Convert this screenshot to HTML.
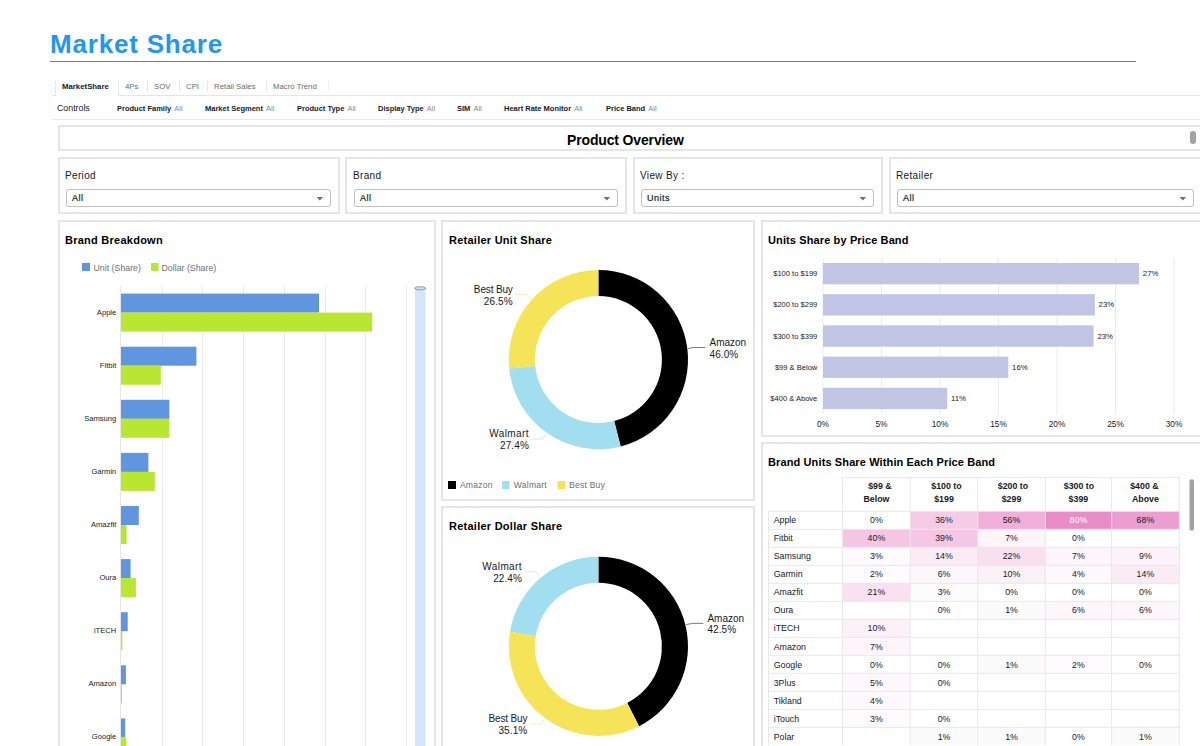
<!DOCTYPE html>
<html><head><meta charset="utf-8">
<style>
*{margin:0;padding:0;box-sizing:border-box}
html,body{width:1200px;height:746px;overflow:hidden;background:#fff}
body{position:relative;font-family:"Liberation Sans",sans-serif;color:#16191f}
.a{position:absolute;white-space:nowrap}
.box{position:absolute;border:2px solid #e6e6e6;background:#fff}
.t{position:absolute;white-space:nowrap;font-weight:bold;font-size:11px;color:#000;letter-spacing:0.25px}
.dd{position:absolute;height:18px;border:1px solid #bdbfc1;border-radius:3px;background:#fff}
.dd span{position:absolute;left:5px;top:3px;font-size:9px;letter-spacing:0.5px;color:#16191f;-webkit-text-stroke:0.2px #16191f}
.dd i{position:absolute;right:6.5px;top:6.5px;width:7.5px;height:4px;background:#707070;clip-path:polygon(0 0,100% 0,50% 100%)}
.tg{top:82px;font-size:7.8px;color:#686c70}
.sep{top:81px;width:1px;height:10px;background:#e3e6e6}
.ctl{top:104px;font-size:7.5px;font-weight:bold;color:#16191f}
.ctl span{font-weight:normal;color:#878c91;margin-left:1px}
.flt{top:170px;font-size:10px;letter-spacing:0.35px;color:#16191f}
.lbl{position:absolute;font-size:9px;color:#16191f}
</style></head><body>

<!-- Title -->
<div class="a" id="title" style="left:50px;top:29px;font-size:26px;letter-spacing:0.8px;font-weight:bold;color:#2196f3;">Market Share</div>
<div class="a" style="left:50px;top:61px;width:1086px;height:1px;background:#2196f3"></div>

<!-- Tabs -->
<div class="a" style="left:50px;top:81px;width:1px;height:665px;background:#fafafa"></div>
<div class="a" style="left:52px;top:95px;width:3px;height:1px;background:#e3e6e6"></div>
<div class="a" style="left:55px;top:81px;width:1px;height:15px;background:#e3e6e6"></div>
<div class="a" style="left:118px;top:81px;width:1px;height:15px;background:#e3e6e6"></div>
<div class="a" style="left:118px;top:95px;width:1082px;height:1px;background:#e3e6e6"></div>
<div class="a tab" style="left:62px;top:82px;font-size:7.8px;font-weight:bold;color:#16191f">MarketShare</div>
<div class="a tg" style="left:125px">4Ps</div>
<div class="a sep" style="left:147px"></div>
<div class="a tg" style="left:154px">SOV</div>
<div class="a sep" style="left:179px"></div>
<div class="a tg" style="left:186px">CPI</div>
<div class="a sep" style="left:207px"></div>
<div class="a tg" style="left:214px">Retail Sales</div>
<div class="a sep" style="left:266px"></div>
<div class="a tg" style="left:273px">Macro Trend</div>
<div class="a sep" style="left:328px;background:#eef0f0"></div>

<!-- Controls -->
<div class="a" style="left:57px;top:103px;font-size:8.8px;color:#16191f">Controls</div>
<div class="a ctl" style="left:117px">Product Family <span>All</span></div>
<div class="a ctl" style="left:205px">Market Segment <span>All</span></div>
<div class="a ctl" style="left:297px">Product Type <span>All</span></div>
<div class="a ctl" style="left:378px">Display Type <span>All</span></div>
<div class="a ctl" style="left:457px">SIM <span>All</span></div>
<div class="a ctl" style="left:504px">Heart Rate Monitor <span>All</span></div>
<div class="a ctl" style="left:606px">Price Band <span>All</span></div>
<div class="a" style="left:52px;top:119px;width:1148px;height:1px;background:#e9ebeb"></div>

<!-- Product overview -->
<div class="box" style="left:58px;top:125px;width:1150px;height:26px"></div>
<div class="t" style="left:567px;top:132px;font-size:14px;letter-spacing:-0.15px">Product Overview</div>
<div class="a" style="left:1190px;top:131px;width:6px;height:13px;border-radius:3px;background:#a2a2a2"></div>

<!-- Filters -->
<div class="box" style="left:58px;top:157px;width:282px;height:57px"></div>
<div class="box" style="left:345px;top:157px;width:282px;height:57px"></div>
<div class="box" style="left:633px;top:157px;width:250px;height:57px"></div>
<div class="box" style="left:889px;top:157px;width:320px;height:57px"></div>
<div class="a flt" style="left:65px">Period</div>
<div class="a flt" style="left:353px">Brand</div>
<div class="a flt" style="left:640px">View By :</div>
<div class="a flt" style="left:896px">Retailer</div>
<div class="dd" style="left:66px;width:265px;top:189px"><span>All</span><i></i></div>
<div class="dd" style="left:354px;width:264px;top:189px"><span>All</span><i></i></div>
<div class="dd" style="left:641px;width:233px;top:189px"><span>Units</span><i></i></div>
<div class="dd" style="left:897px;width:297px;top:189px"><span>All</span><i></i></div>

<!-- Panels -->
<div class="box" style="left:58px;top:220px;width:378px;height:540px"></div>
<div class="box" style="left:441px;top:220px;width:314px;height:281px"></div>
<div class="box" style="left:441px;top:506px;width:314px;height:260px"></div>
<div class="box" style="left:761px;top:220px;width:460px;height:217px"></div>
<div class="box" style="left:761px;top:442px;width:460px;height:320px"></div>

<div class="t" style="left:65px;top:234px">Brand Breakdown</div>
<div class="t" style="left:449px;top:234px">Retailer Unit Share</div>
<div class="t" style="left:449px;top:520px">Retailer Dollar Share</div>
<div class="t" style="left:768px;top:234px;letter-spacing:0.12px">Units Share by Price Band</div>
<div class="t" style="left:768px;top:456px;letter-spacing:0.12px">Brand Units Share Within Each Price Band</div>

<!-- BB -->
<svg class="a" style="left:0;top:0" width="1200" height="746" font-family="Liberation Sans, sans-serif">
<rect x="82" y="263" width="8" height="8" fill="#6096e0"/>
<text x="93.5" y="270.5" font-size="8.8" fill="#6b6f73">Unit (Share)</text>
<rect x="151" y="263" width="7.5" height="8" fill="#b9e630"/>
<text x="161.5" y="270.5" font-size="8.8" fill="#6b6f73">Dollar (Share)</text>
<rect x="162" y="286" width="1" height="460" fill="#ebebeb"/>
<rect x="202" y="286" width="1" height="460" fill="#ebebeb"/>
<rect x="243" y="286" width="1" height="460" fill="#ebebeb"/>
<rect x="284" y="286" width="1" height="460" fill="#ebebeb"/>
<rect x="325" y="286" width="1" height="460" fill="#ebebeb"/>
<rect x="365" y="286" width="1" height="460" fill="#ebebeb"/>
<rect x="406" y="286" width="1" height="460" fill="#ebebeb"/>
<rect x="120" y="286" width="1" height="460" fill="#e6e6e6"/>
<rect x="121" y="293.6" width="198.0" height="19" fill="#6096e0"/>
<rect x="121" y="312.6" width="251.2" height="19" fill="#b9e630"/>
<text x="116.3" y="314.6" font-size="7.6" fill="#16191f" text-anchor="end">Apple</text>
<rect x="121" y="346.7" width="75.4" height="19" fill="#6096e0"/>
<rect x="121" y="365.7" width="39.8" height="19" fill="#b9e630"/>
<text x="116.3" y="367.7" font-size="7.6" fill="#16191f" text-anchor="end">Fitbit</text>
<rect x="121" y="399.8" width="48.4" height="19" fill="#6096e0"/>
<rect x="121" y="418.8" width="48.4" height="19" fill="#b9e630"/>
<text x="116.3" y="420.8" font-size="7.6" fill="#16191f" text-anchor="end">Samsung</text>
<rect x="121" y="452.9" width="27.4" height="19" fill="#6096e0"/>
<rect x="121" y="471.9" width="33.8" height="19" fill="#b9e630"/>
<text x="116.3" y="473.9" font-size="7.6" fill="#16191f" text-anchor="end">Garmin</text>
<rect x="121" y="506.0" width="17.8" height="19" fill="#6096e0"/>
<rect x="121" y="525.0" width="5.6" height="19" fill="#b9e630"/>
<text x="116.3" y="527.0" font-size="7.6" fill="#16191f" text-anchor="end">Amazfit</text>
<rect x="121" y="559.1" width="9.6" height="19" fill="#6096e0"/>
<rect x="121" y="578.1" width="14.9" height="19" fill="#b9e630"/>
<text x="116.3" y="580.1" font-size="7.6" fill="#16191f" text-anchor="end">Oura</text>
<rect x="121" y="612.2" width="6.7" height="19" fill="#6096e0"/>
<rect x="121" y="631.2" width="1.4" height="19" fill="#b9e630"/>
<text x="116.3" y="633.2" font-size="7.6" fill="#16191f" text-anchor="end">iTECH</text>
<rect x="121" y="665.3" width="4.9" height="19" fill="#6096e0"/>
<rect x="121" y="684.3" width="1.0" height="19" fill="#b9e630"/>
<text x="116.3" y="686.3" font-size="7.6" fill="#16191f" text-anchor="end">Amazon</text>
<rect x="121" y="718.4" width="4.2" height="19" fill="#6096e0"/>
<rect x="121" y="737.4" width="5.3" height="19" fill="#b9e630"/>
<text x="116.3" y="739.4" font-size="7.6" fill="#16191f" text-anchor="end">Google</text>
<rect x="415" y="288.5" width="10.5" height="470" fill="#d4e6f8"/>
<path d="M414.5,288.3 L417,286.8 L423.5,286.8 L426,288.3 L423.5,289.8 L417,289.8 Z" fill="#c9def0" stroke="#7d8a95" stroke-width="0.8"/>
</svg>
<!-- /BB -->
<!-- DONUT -->
<svg class="a" style="left:0;top:0" width="1200" height="746" font-family="Liberation Sans, sans-serif">
<path d="M598.40,270.00 A89.6,89.6 0 0 1 620.68,446.39 L614.19,421.11 A63.5,63.5 0 0 0 598.40,296.10 Z" fill="#000000"/>
<path d="M620.68,446.39 A89.6,89.6 0 0 1 509.25,368.59 L535.22,365.97 A63.5,63.5 0 0 0 614.19,421.11 Z" fill="#a0def0"/>
<path d="M509.25,368.59 A89.6,89.6 0 0 1 598.40,270.00 L598.40,296.10 A63.5,63.5 0 0 0 535.22,365.97 Z" fill="#f6e458"/>
<polyline points="687.9,348.6 693,347.5 705.4,347.5" fill="none" stroke="#6b6b6b" stroke-width="0.9"/>
<polyline points="516,294.3 526.3,294.3 531.7,299.3" fill="none" stroke="#f7ec9e" stroke-width="0.9"/>
<polyline points="532,439 542.3,439 546.3,433.7" fill="none" stroke="#c5ebf7" stroke-width="0.9"/>
<text x="709.5" y="345.7" font-size="10" fill="#16191f" letter-spacing="0">Amazon</text>
<text x="709.5" y="357.6" font-size="10" fill="#16191f" letter-spacing="0.1">46.0%</text>
<text x="512.7" y="292.8" font-size="10" fill="#16191f" text-anchor="end" letter-spacing="-0.15">Best Buy</text>
<text x="512.7" y="304.5" font-size="10" fill="#16191f" text-anchor="end" letter-spacing="0.1">26.5%</text>
<text x="528.9" y="437.1" font-size="10" fill="#16191f" text-anchor="end" letter-spacing="0.4">Walmart</text>
<text x="528.9" y="449.1" font-size="10" fill="#16191f" text-anchor="end" letter-spacing="0.1">27.4%</text>
<rect x="448" y="481" width="8" height="8" fill="#000000"/><text x="459.9" y="487.8" font-size="8.6" fill="#6b6f73" letter-spacing="0.2">Amazon</text>
<rect x="502" y="481" width="7.5" height="8" fill="#a0def0"/><text x="513.8" y="487.8" font-size="8.6" fill="#6b6f73" letter-spacing="0.2">Walmart</text>
<rect x="557.5" y="481" width="8" height="8" fill="#f6e458"/><text x="569.1" y="487.8" font-size="8.6" fill="#6b6f73" letter-spacing="0.2">Best Buy</text>
<path d="M598.40,556.70 A89.6,89.6 0 0 1 639.08,726.13 L627.23,702.88 A63.5,63.5 0 0 0 598.40,582.80 Z" fill="#000000"/>
<path d="M639.08,726.13 A89.6,89.6 0 0 1 509.99,631.73 L535.75,635.97 A63.5,63.5 0 0 0 627.23,702.88 Z" fill="#f6e458"/>
<path d="M509.99,631.73 A89.6,89.6 0 0 1 598.40,556.70 L598.40,582.80 A63.5,63.5 0 0 0 535.75,635.97 Z" fill="#a0def0"/>
<polyline points="686.1,624.5 692.8,623.4 703.3,623.4" fill="none" stroke="#6b6b6b" stroke-width="0.9"/>
<polyline points="525,571.7 535.7,571.7 539.7,576.7" fill="none" stroke="#c5ebf7" stroke-width="0.9"/>
<polyline points="530.3,724 541,724 544.7,718.7" fill="none" stroke="#f7ec9e" stroke-width="0.9"/>
<text x="707.4" y="621.6" font-size="10" fill="#16191f" letter-spacing="0">Amazon</text>
<text x="707.4" y="633.2" font-size="10" fill="#16191f" letter-spacing="0.1">42.5%</text>
<text x="522.0" y="569.5" font-size="10" fill="#16191f" text-anchor="end" letter-spacing="0.4">Walmart</text>
<text x="522.0" y="581.5" font-size="10" fill="#16191f" text-anchor="end" letter-spacing="0.1">22.4%</text>
<text x="527.3" y="722.1" font-size="10" fill="#16191f" text-anchor="end" letter-spacing="-0.15">Best Buy</text>
<text x="527.3" y="733.8" font-size="10" fill="#16191f" text-anchor="end" letter-spacing="0.1">35.1%</text>
</svg>
<!-- /DONUT -->
<!-- USPB -->
<svg class="a" style="left:0;top:0" width="1200" height="746" font-family="Liberation Sans, sans-serif">
<rect x="822.5" y="258" width="1" height="156" fill="#ebebeb"/>
<text x="823.0" y="427" font-size="8.3" fill="#16191f" text-anchor="middle">0%</text>
<rect x="881.0" y="258" width="1" height="156" fill="#ebebeb"/>
<text x="881.5" y="427" font-size="8.3" fill="#16191f" text-anchor="middle">5%</text>
<rect x="939.5" y="258" width="1" height="156" fill="#ebebeb"/>
<text x="940.0" y="427" font-size="8.3" fill="#16191f" text-anchor="middle">10%</text>
<rect x="998.0" y="258" width="1" height="156" fill="#ebebeb"/>
<text x="998.5" y="427" font-size="8.3" fill="#16191f" text-anchor="middle">15%</text>
<rect x="1056.5" y="258" width="1" height="156" fill="#ebebeb"/>
<text x="1057.0" y="427" font-size="8.3" fill="#16191f" text-anchor="middle">20%</text>
<rect x="1115.0" y="258" width="1" height="156" fill="#ebebeb"/>
<text x="1115.5" y="427" font-size="8.3" fill="#16191f" text-anchor="middle">25%</text>
<rect x="1173.5" y="258" width="1" height="156" fill="#ebebeb"/>
<text x="1174.0" y="427" font-size="8.3" fill="#16191f" text-anchor="middle">30%</text>
<rect x="823" y="263.0" width="316.0" height="21.3" fill="#c1c4e4"/>
<text x="817.3" y="276.2" font-size="7.55" fill="#16191f" text-anchor="end">$100 to $199</text>
<text x="1142.8" y="276.2" font-size="7.8" fill="#16191f">27%</text>
<rect x="823" y="294.2" width="271.8" height="21.3" fill="#c1c4e4"/>
<text x="817.3" y="307.4" font-size="7.55" fill="#16191f" text-anchor="end">$200 to $299</text>
<text x="1098.6" y="307.4" font-size="7.8" fill="#16191f">23%</text>
<rect x="823" y="325.4" width="270.6" height="21.3" fill="#c1c4e4"/>
<text x="817.3" y="338.6" font-size="7.55" fill="#16191f" text-anchor="end">$300 to $399</text>
<text x="1097.4" y="338.6" font-size="7.8" fill="#16191f">23%</text>
<rect x="823" y="356.6" width="185.3" height="21.3" fill="#c1c4e4"/>
<text x="817.3" y="369.8" font-size="7.55" fill="#16191f" text-anchor="end">$99 &amp; Below</text>
<text x="1012.1" y="369.8" font-size="7.8" fill="#16191f">16%</text>
<rect x="823" y="387.8" width="124.2" height="21.3" fill="#c1c4e4"/>
<text x="817.3" y="401.0" font-size="7.55" fill="#16191f" text-anchor="end">$400 &amp; Above</text>
<text x="951.0" y="401.0" font-size="7.8" fill="#16191f">11%</text>
</svg>
<!-- /USPB -->
<!-- TBL -->
<svg class="a" style="left:0;top:0" width="1200" height="746" font-family="Liberation Sans, sans-serif">
<rect x="910.2" y="511.3" width="67.5" height="18.0" fill="#f6cbe6"/>
<rect x="977.7" y="511.3" width="67.6" height="18.0" fill="#f0aed8"/>
<rect x="1045.3" y="511.3" width="66.3" height="18.0" fill="#ea8cc8"/>
<rect x="1111.6" y="511.3" width="67.7" height="18.0" fill="#ed9dd0"/>
<rect x="842.5" y="529.3" width="67.7" height="18.0" fill="#f4c6e4"/>
<rect x="910.2" y="529.3" width="67.5" height="18.0" fill="#f5c7e4"/>
<rect x="977.7" y="529.3" width="67.6" height="18.0" fill="#fdf5fa"/>
<rect x="842.5" y="547.3" width="67.7" height="18.0" fill="#fefbfd"/>
<rect x="910.2" y="547.3" width="67.5" height="18.0" fill="#fbebf5"/>
<rect x="977.7" y="547.3" width="67.6" height="18.0" fill="#f9dff0"/>
<rect x="1045.3" y="547.3" width="66.3" height="18.0" fill="#fdf5fa"/>
<rect x="1111.6" y="547.3" width="67.7" height="18.0" fill="#fdf2f9"/>
<rect x="842.5" y="565.3" width="67.7" height="18.0" fill="#fefcfe"/>
<rect x="910.2" y="565.3" width="67.5" height="18.0" fill="#fdf6fb"/>
<rect x="977.7" y="565.3" width="67.6" height="18.0" fill="#fcf1f8"/>
<rect x="1045.3" y="565.3" width="66.3" height="18.0" fill="#fef9fc"/>
<rect x="1111.6" y="565.3" width="67.7" height="18.0" fill="#fbebf5"/>
<rect x="842.5" y="583.3" width="67.7" height="18.0" fill="#f9e1f1"/>
<rect x="910.2" y="583.3" width="67.5" height="18.0" fill="#fefbfd"/>
<rect x="977.7" y="601.3" width="67.6" height="18.0" fill="#fbfbfb"/>
<rect x="1045.3" y="601.3" width="66.3" height="18.0" fill="#fdf6fb"/>
<rect x="1111.6" y="601.3" width="67.7" height="18.0" fill="#fdf6fb"/>
<rect x="842.5" y="619.3" width="67.7" height="18.0" fill="#fcf1f8"/>
<rect x="842.5" y="637.3" width="67.7" height="18.0" fill="#fdf5fa"/>
<rect x="977.7" y="655.3" width="67.6" height="18.0" fill="#fbfbfb"/>
<rect x="1045.3" y="655.3" width="66.3" height="18.0" fill="#fefcfe"/>
<rect x="842.5" y="673.3" width="67.7" height="18.0" fill="#fef8fc"/>
<rect x="842.5" y="691.3" width="67.7" height="18.0" fill="#fef9fc"/>
<rect x="842.5" y="709.3" width="67.7" height="18.0" fill="#fefbfd"/>
<rect x="910.2" y="727.3" width="67.5" height="18.0" fill="#fbfbfb"/>
<rect x="977.7" y="727.3" width="67.6" height="18.0" fill="#fbfbfb"/>
<rect x="1111.6" y="727.3" width="67.7" height="18.0" fill="#fbfbfb"/>
<rect x="842.0" y="477.1" width="337.8" height="1" fill="#e8e8e8"/>
<rect x="768.0" y="510.8" width="411.8" height="1" fill="#e8e8e8"/>
<rect x="768.0" y="528.8" width="411.8" height="1" fill="#e8e8e8"/>
<rect x="768.0" y="546.8" width="411.8" height="1" fill="#e8e8e8"/>
<rect x="768.0" y="564.8" width="411.8" height="1" fill="#e8e8e8"/>
<rect x="768.0" y="582.8" width="411.8" height="1" fill="#e8e8e8"/>
<rect x="768.0" y="600.8" width="411.8" height="1" fill="#e8e8e8"/>
<rect x="768.0" y="618.8" width="411.8" height="1" fill="#e8e8e8"/>
<rect x="768.0" y="636.8" width="411.8" height="1" fill="#e8e8e8"/>
<rect x="768.0" y="654.8" width="411.8" height="1" fill="#e8e8e8"/>
<rect x="768.0" y="672.8" width="411.8" height="1" fill="#e8e8e8"/>
<rect x="768.0" y="690.8" width="411.8" height="1" fill="#e8e8e8"/>
<rect x="768.0" y="708.8" width="411.8" height="1" fill="#e8e8e8"/>
<rect x="768.0" y="726.8" width="411.8" height="1" fill="#e8e8e8"/>

<rect x="768.0" y="511.3" width="1" height="234.0" fill="#e8e8e8"/>
<rect x="842.0" y="477.6" width="1" height="267.7" fill="#e8e8e8"/>
<rect x="909.7" y="477.6" width="1" height="267.7" fill="#e8e8e8"/>
<rect x="977.2" y="477.6" width="1" height="267.7" fill="#e8e8e8"/>
<rect x="1044.8" y="477.6" width="1" height="267.7" fill="#e8e8e8"/>
<rect x="1111.1" y="477.6" width="1" height="267.7" fill="#e8e8e8"/>
<rect x="1178.8" y="477.6" width="1" height="267.7" fill="#e8e8e8"/>
<text x="879.9" y="489.3" font-size="8.8" font-weight="bold" fill="#16191f" text-anchor="middle">$99 &amp;</text>
<text x="876.4" y="502" font-size="8.8" font-weight="bold" fill="#16191f" text-anchor="middle">Below</text>
<text x="946.5" y="489.3" font-size="8.8" font-weight="bold" fill="#16191f" text-anchor="middle">$100 to</text>
<text x="944.0" y="502" font-size="8.8" font-weight="bold" fill="#16191f" text-anchor="middle">$199</text>
<text x="1013.0" y="489.3" font-size="8.8" font-weight="bold" fill="#16191f" text-anchor="middle">$200 to</text>
<text x="1011.5" y="502" font-size="8.8" font-weight="bold" fill="#16191f" text-anchor="middle">$299</text>
<text x="1078.9" y="489.3" font-size="8.8" font-weight="bold" fill="#16191f" text-anchor="middle">$300 to</text>
<text x="1078.4" y="502" font-size="8.8" font-weight="bold" fill="#16191f" text-anchor="middle">$399</text>
<text x="1144.4" y="489.3" font-size="8.8" font-weight="bold" fill="#16191f" text-anchor="middle">$400 &amp;</text>
<text x="1145.4" y="502" font-size="8.8" font-weight="bold" fill="#16191f" text-anchor="middle">Above</text>
<text x="773.7" y="523.1" font-size="8.8" fill="#16191f">Apple</text>
<text x="876.4" y="523.1" font-size="8.8" fill="#16191f" text-anchor="middle">0%</text>
<text x="944.0" y="523.1" font-size="8.8" fill="#16191f" text-anchor="middle">36%</text>
<text x="1011.5" y="523.1" font-size="8.8" fill="#16191f" text-anchor="middle">56%</text>
<text x="1078.4" y="523.1" font-size="8.8" fill="#ffffff" text-anchor="middle">80%</text>
<text x="1145.4" y="523.1" font-size="8.8" fill="#16191f" text-anchor="middle">68%</text>
<text x="773.7" y="541.1" font-size="8.8" fill="#16191f">Fitbit</text>
<text x="876.4" y="541.1" font-size="8.8" fill="#16191f" text-anchor="middle">40%</text>
<text x="944.0" y="541.1" font-size="8.8" fill="#16191f" text-anchor="middle">39%</text>
<text x="1011.5" y="541.1" font-size="8.8" fill="#16191f" text-anchor="middle">7%</text>
<text x="1078.4" y="541.1" font-size="8.8" fill="#16191f" text-anchor="middle">0%</text>
<text x="773.7" y="559.2" font-size="8.8" fill="#16191f">Samsung</text>
<text x="876.4" y="559.2" font-size="8.8" fill="#16191f" text-anchor="middle">3%</text>
<text x="944.0" y="559.2" font-size="8.8" fill="#16191f" text-anchor="middle">14%</text>
<text x="1011.5" y="559.2" font-size="8.8" fill="#16191f" text-anchor="middle">22%</text>
<text x="1078.4" y="559.2" font-size="8.8" fill="#16191f" text-anchor="middle">7%</text>
<text x="1145.4" y="559.2" font-size="8.8" fill="#16191f" text-anchor="middle">9%</text>
<text x="773.7" y="577.2" font-size="8.8" fill="#16191f">Garmin</text>
<text x="876.4" y="577.2" font-size="8.8" fill="#16191f" text-anchor="middle">2%</text>
<text x="944.0" y="577.2" font-size="8.8" fill="#16191f" text-anchor="middle">6%</text>
<text x="1011.5" y="577.2" font-size="8.8" fill="#16191f" text-anchor="middle">10%</text>
<text x="1078.4" y="577.2" font-size="8.8" fill="#16191f" text-anchor="middle">4%</text>
<text x="1145.4" y="577.2" font-size="8.8" fill="#16191f" text-anchor="middle">14%</text>
<text x="773.7" y="595.3" font-size="8.8" fill="#16191f">Amazfit</text>
<text x="876.4" y="595.3" font-size="8.8" fill="#16191f" text-anchor="middle">21%</text>
<text x="944.0" y="595.3" font-size="8.8" fill="#16191f" text-anchor="middle">3%</text>
<text x="1011.5" y="595.3" font-size="8.8" fill="#16191f" text-anchor="middle">0%</text>
<text x="1078.4" y="595.3" font-size="8.8" fill="#16191f" text-anchor="middle">0%</text>
<text x="1145.4" y="595.3" font-size="8.8" fill="#16191f" text-anchor="middle">0%</text>
<text x="773.7" y="613.4" font-size="8.8" fill="#16191f">Oura</text>
<text x="944.0" y="613.4" font-size="8.8" fill="#16191f" text-anchor="middle">0%</text>
<text x="1011.5" y="613.4" font-size="8.8" fill="#16191f" text-anchor="middle">1%</text>
<text x="1078.4" y="613.4" font-size="8.8" fill="#16191f" text-anchor="middle">6%</text>
<text x="1145.4" y="613.4" font-size="8.8" fill="#16191f" text-anchor="middle">6%</text>
<text x="773.7" y="631.4" font-size="8.8" fill="#16191f">iTECH</text>
<text x="876.4" y="631.4" font-size="8.8" fill="#16191f" text-anchor="middle">10%</text>
<text x="773.7" y="649.5" font-size="8.8" fill="#16191f">Amazon</text>
<text x="876.4" y="649.5" font-size="8.8" fill="#16191f" text-anchor="middle">7%</text>
<text x="773.7" y="667.5" font-size="8.8" fill="#16191f">Google</text>
<text x="876.4" y="667.5" font-size="8.8" fill="#16191f" text-anchor="middle">0%</text>
<text x="944.0" y="667.5" font-size="8.8" fill="#16191f" text-anchor="middle">0%</text>
<text x="1011.5" y="667.5" font-size="8.8" fill="#16191f" text-anchor="middle">1%</text>
<text x="1078.4" y="667.5" font-size="8.8" fill="#16191f" text-anchor="middle">2%</text>
<text x="1145.4" y="667.5" font-size="8.8" fill="#16191f" text-anchor="middle">0%</text>
<text x="773.7" y="685.6" font-size="8.8" fill="#16191f">3Plus</text>
<text x="876.4" y="685.6" font-size="8.8" fill="#16191f" text-anchor="middle">5%</text>
<text x="944.0" y="685.6" font-size="8.8" fill="#16191f" text-anchor="middle">0%</text>
<text x="773.7" y="703.6" font-size="8.8" fill="#16191f">Tikland</text>
<text x="876.4" y="703.6" font-size="8.8" fill="#16191f" text-anchor="middle">4%</text>
<text x="773.7" y="721.7" font-size="8.8" fill="#16191f">iTouch</text>
<text x="876.4" y="721.7" font-size="8.8" fill="#16191f" text-anchor="middle">3%</text>
<text x="944.0" y="721.7" font-size="8.8" fill="#16191f" text-anchor="middle">0%</text>
<text x="773.7" y="739.7" font-size="8.8" fill="#16191f">Polar</text>
<text x="944.0" y="739.7" font-size="8.8" fill="#16191f" text-anchor="middle">1%</text>
<text x="1011.5" y="739.7" font-size="8.8" fill="#16191f" text-anchor="middle">1%</text>
<text x="1078.4" y="739.7" font-size="8.8" fill="#16191f" text-anchor="middle">0%</text>
<text x="1145.4" y="739.7" font-size="8.8" fill="#16191f" text-anchor="middle">1%</text>
<rect x="1189.5" y="479.3" width="4.5" height="51.5" rx="2.2" fill="#a3a3a3"/>
</svg>
<!-- /TBL -->
</body></html>
